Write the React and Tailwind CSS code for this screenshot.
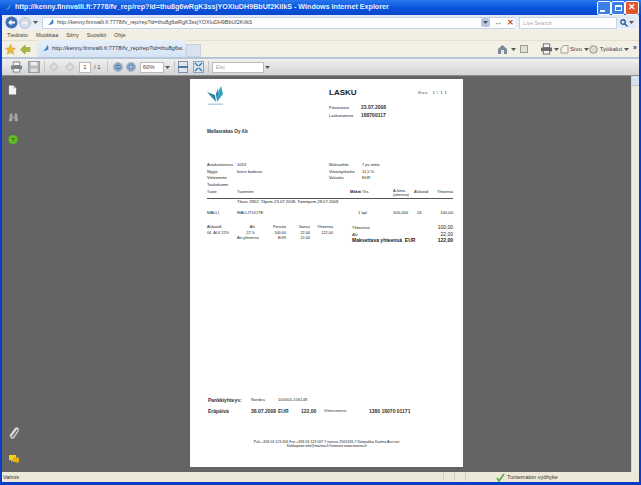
import React from "react";

const font = { fontFamily: '"Liberation Sans", Arial, sans-serif' };

function Win({ children, className }) {
  return <div className={"w-[14px] h-[14px] rounded-[2px] border border-white flex items-center justify-center " + className}>{children}</div>;
}

function Caret() {
  return <svg width="5" height="3" viewBox="0 0 5 3" className="shrink-0"><path d="M0 0h5L2.5 3z" fill="#555" /></svg>;
}

function IeIcon() {
  return (
    <svg width="9" height="9" viewBox="0 0 9 9" className="shrink-0">
      <path d="M1 6 Q4 7 6 2 L7 1 L7.5 5 Q5 8 1 6z" fill="#3a80c8" />
    </svg>
  );
}

function TbBtn({ children, className = "" }) {
  return <div className={"flex items-center justify-center " + className}>{children}</div>;
}

function Printer({ c = "#7c8286" }) {
  return (
    <svg width="13" height="12" viewBox="0 0 14 13">
      <rect x="3.5" y="1" width="7" height="4" fill="#f4f4f4" stroke={c} />
      <rect x="1" y="5" width="12" height="4" fill={c} />
      <rect x="3.5" y="8" width="7" height="4" fill="#f4f4f4" stroke={c} />
    </svg>
  );
}

function Disk() {
  return (
    <svg width="12" height="12" viewBox="0 0 13 13">
      <rect x="0.5" y="0.5" width="12" height="12" fill="#b4b8ba" stroke="#95999c" />
      <rect x="3" y="1" width="7" height="4" fill="#eceeef" />
      <rect x="3" y="8" width="7" height="4" fill="#dcdee0" />
    </svg>
  );
}

function Diamond({ up }) {
  return (
    <svg width="10" height="10" viewBox="0 0 11 11">
      <path d="M5.5 0.5 L10.5 5.5 L5.5 10.5 L0.5 5.5z" fill="#cfd2d4" stroke="#c2c5c8" />
      <path d={up ? "M5.5 3 L8 6 H3z" : "M5.5 8 L8 5 H3z"} fill="#e6e8e9" />
    </svg>
  );
}

function Zoom({ plus }) {
  return (
    <svg width="10" height="10" viewBox="0 0 11 11">
      <circle cx="5.5" cy="5.5" r="5" fill="#8aa6c0" stroke="#a9b8c6" />
      <circle cx="5.5" cy="5.5" r="2.6" fill="#4580b0" />
      <rect x="3.5" y="5" width="4" height="1" fill="#dde" />
      {plus && <rect x="5" y="3.5" width="1" height="4" fill="#dde" />}
    </svg>
  );
}

function Logo() {
  return (
    <svg width="17" height="20" viewBox="0 0 17 20">
      <path d="M0 6 L8 9 L9 16 Z" fill="#2d84a6" />
      <path d="M14 0 L16 8 L10 16 L10 8 Z" fill="#3aa0c4" />
      <path d="M9 8 L11 2 L10 15 Z" fill="#1d6f93" />
      <rect x="1" y="17.5" width="15" height="1.4" fill="#a9cfe0" />
    </svg>
  );
}

function Invoice() {
  const k = "text-[4px] leading-[6.5px] text-[#222]";
  return (
    <div className="w-[273px] h-[388px] bg-white shrink-0 pl-[17px] pr-[10px] flex flex-col text-[#333]" style={font}>
      <div className="flex h-[44px] pt-[7px]">
        <div className="w-[122px]"><Logo /></div>
        <div className="flex-1">
          <div className="flex h-[14px] items-center">
            <div className="w-[89px] text-[8px] font-bold text-[#222]">LASKU</div>
            <div className="text-[4px] tracking-[0.5px] text-[#333]">Sivu &nbsp; 1 / 1 1</div>
          </div>
          <div className="flex mt-[4px] h-[8px] items-center">
            <div className="w-[32px] text-[4px] text-[#222]">Päiväväärä</div>
            <div className="text-[5px] font-bold">23.07.2008</div>
          </div>
          <div className="flex h-[8px] items-center">
            <div className="w-[32px] text-[4px] text-[#222]">Laskunumero</div>
            <div className="text-[5px] font-bold">188700117</div>
          </div>
        </div>
      </div>
      <div className="mt-[5px] h-[8px] text-[4.6px] leading-[8px] font-bold">Mallasrakas Oy Ab</div>
      <div className="mt-[26px] flex h-[28px]">
        <div className="w-[122px]">
          <div className={"flex " + k}><div className="w-[30px]">Asiakastunnus</div><div>1053</div></div>
          <div className={"flex " + k}><div className="w-[30px]">Myyjä</div><div>keers baderas</div></div>
          <div className={k}>Viitteemme</div>
          <div className={k}>Toukokuime</div>
        </div>
        <div>
          <div className={"flex " + k}><div className="w-[33px]">Maksuehto</div><div>7 pv netto</div></div>
          <div className={"flex " + k}><div className="w-[33px]">Viivästyskorko</div><div>11,5 %</div></div>
          <div className={"flex " + k}><div className="w-[33px]">Valuutta</div><div>EUR</div></div>
        </div>
      </div>
      <div className="flex h-[8px] items-start text-[3.8px] leading-[4px] text-[#222] border-b border-[#555] box-content">
        <div className="w-[30px]">Tuote</div>
        <div className="w-[113px]">Tuotenimi</div>
        <div className="w-[12px] font-bold">Määrä</div>
        <div className="w-[31px]">Yks.</div>
        <div className="w-[21px] leading-[3.5px]">A-hinta<br />(alennus)</div>
        <div className="w-[20px]">Alvkoodi</div>
        <div className="flex-1 text-right">Yhteensä</div>
      </div>
      <div className="pl-[30px] h-[7px] text-[4.2px] leading-[6px] text-[#222]">Tilaus 3352, Tilpvm 23.07.2008, Toimitpvm 28.07.2008</div>
      <div className="mt-[3px] flex h-[7px] text-[4.2px] leading-[7px] text-[#222]">
        <div className="w-[30px]">MALLI</div>
        <div className="w-[121px]">MALLITUOTE</div>
        <div className="w-[35px]">1 kpl</div>
        <div className="w-[24px]">100,000</div>
        <div className="w-[14px]">24</div>
        <div className="flex-1 text-right">100,00</div>
      </div>
      <div className="mt-[9px] flex h-[22px] text-[3.8px] leading-[5.5px] text-[#222]">
        <div className="w-[145px] grid grid-cols-[30px_18px_31px_24px_23px] content-start">
          <div>Alvkoodi</div><div className="text-right">Alv</div><div className="text-right">Perusta</div><div className="text-right">Vainus</div><div className="text-right">Yhteensä</div>
          <div>04 &nbsp;ALV 22%</div><div className="text-right">22 %</div><div className="text-right">100,00</div><div className="text-right">22,00</div><div className="text-right">122,00</div>
          <div className="col-span-2 pl-[30px] whitespace-nowrap">Alv yhteensä</div><div className="text-right">EUR</div><div className="text-right">22,00</div><div></div>
        </div>
        <div className="flex-1 flex flex-col text-[4.2px]">
          <div className="flex justify-between h-[7px]"><div>Yhteensä</div><div className="text-[5px]">100,00</div></div>
          <div className="flex justify-between h-[6px]"><div>Alv</div><div className="text-[5px]">22,00</div></div>
          <div className="flex justify-between h-[7px] font-bold text-[5px] text-[#222]"><div>Maksettava yhteensä &nbsp;EUR</div><div>122,00</div></div>
        </div>
      </div>
      <div className="mt-[149px] flex items-center h-[9px] font-bold text-[5px]">
        <div className="w-[44px] pl-[1px]">Pankkiyhteys:</div>
        <div className="w-[27px] font-normal text-[4.2px]">Nordea</div>
        <div className="font-normal text-[4.2px]">100000-106148</div>
      </div>
      <div className="mt-[2px] flex items-center h-[9px] text-[5px] font-bold">
        <div className="w-[44px] pl-[1px]">Eräpäivä</div>
        <div className="w-[27px]">38.07.2008</div>
        <div className="w-[23px]">EUR</div>
        <div className="w-[23px]">122,00</div>
        <div className="w-[45px] font-normal text-[4.2px]">Viitenumero</div>
        <div>1380 18070 01171</div>
      </div>
      <div className="mt-[24px] -ml-[17px] -mr-[10px] text-center text-[3.6px] leading-[4px] text-[#222]">
        <div>Puh +358 03 123 456 Fax +358 03 123 567 Y-tunnus 2561326-7 Kotipaikka Katima Arvi.net</div>
        <div>Sähköposti info@marina.fi Kotisivut www.marina.fi</div>
      </div>
    </div>
  );
}

export default function App() {
  return (
    <div className="w-[641px] h-[485px] overflow-hidden flex flex-col bg-[#0a3cc8]" style={font}>
      {/* Title bar */}
      <div className="h-[15px] shrink-0 flex items-center pl-[3px] pr-[2px] bg-gradient-to-b from-[#2a78ee] via-[#0a55dc] to-[#0a48cc]">
        <IeIcon />
        <div className="ml-[3px] flex-1 text-[7.15px] font-bold text-[#e8f0ff] truncate">http://kenny.finnvalli.fi:7778/fv_rep/rep?id=thu8g6wRgK3ssjYOXIuDH9BbUf2KiIkS - Windows Internet Explorer</div>
        <div className="flex">
          <Win className="bg-[#3a7fe8]"><div className="w-[5px] h-[1.5px] bg-white mt-[7px] -ml-[3px]" /></Win>
          <Win className="bg-[#3a7fe8]"><div className="w-[7px] h-[6px] border border-white border-t-2" /></Win>
          <Win className="bg-[#e0562c]"><span className="text-white text-[9px] font-bold leading-none">✕</span></Win>
        </div>
      </div>
      <div className="flex-1 min-h-0 mx-[2px] flex flex-col bg-[#f0ece0]">
        {/* Address bar */}
        <div className="h-[15px] shrink-0 flex items-center bg-gradient-to-b from-[#dfe8f4] to-[#eef2f8] pl-[3px] pr-[3px]">
          <svg width="13" height="13" viewBox="0 0 13 13" className="shrink-0">
            <circle cx="6.5" cy="6.5" r="6" fill="#3f6fb5" />
            <path d="M3 6.5 L6.5 3.5 V5.5 H10 V7.5 H6.5 V9.5z" fill="#fff" />
          </svg>
          <svg width="12" height="12" viewBox="0 0 12 12" className="shrink-0 ml-[1px]">
            <circle cx="6" cy="6" r="5.5" fill="#d3dbe6" stroke="#b8c2d0" />
            <path d="M9 6 L6 3.5 V5 H3 V7 H6 V8.5z" fill="#eef2f6" />
          </svg>
          <div className="ml-[2px] mr-[2px]"><Caret /></div>
          <div className="ml-[2px] w-[473px] h-[12px] bg-white border-y border-l border-[#c6d2e2] flex items-center pl-[3px] shrink-0">
            <IeIcon />
            <div className="ml-[2px] text-[5.4px] text-[#444] truncate">http://kenny.finnvalli.fi:7778/fv_rep/rep?id=thu8g6wRgK3ssjYOXIuDH9BbUf2KiIkS</div>
            <div className="ml-auto flex items-center h-full">
              <div className="w-[9px] h-[9px] rounded-[2px] bg-[#b3c7e2] flex items-center justify-center"><Caret /></div>
              <div className="ml-[3px] w-[10px] h-[10px] text-[8px] leading-[10px] text-center font-bold text-[#3a8a4a]">↔</div>
              <div className="ml-[2px] w-[10px] h-[10px] text-[8px] leading-[10px] text-center font-bold text-[#c84a3a]">✕</div>
            </div>
          </div>
          <div className="ml-[4px] flex-1 h-[12px] bg-white border border-[#c6d2e2] text-[5.5px] leading-[10px] pl-[3px] text-[#aaa]">Live Search</div>
          <div className="ml-[1px] w-[18px] h-[11px] flex items-center justify-center gap-[1px] bg-[#e2e9f3] rounded-[2px]">
            <svg width="8" height="8" viewBox="0 0 8 8"><circle cx="3" cy="3" r="2.2" fill="none" stroke="#2a5fa8" strokeWidth="1.4" /><path d="M4.5 4.5L7.5 7.5" stroke="#2a5fa8" strokeWidth="1.4" /></svg>
            <Caret />
          </div>
        </div>
        {/* Menu */}
        <div className="h-[11px] shrink-0 flex items-center pl-[5px] gap-[8px] text-[5.5px] text-[#444] bg-[#f2eee2] border-b border-[#e4dfcf]">
          <span>Tiedosto</span><span>Muokkaa</span><span>Siirry</span><span>Suosikit</span><span>Ohje</span>
        </div>
        {/* Favorites and tabs */}
        <div className="h-[18px] shrink-0 flex items-center pl-[3px] pr-[2px] bg-[#f2efe4] border-b-2 border-[#b7c6d8]">
          <svg width="11" height="11" viewBox="0 0 11 11" className="shrink-0"><path d="M5.5 0.5 L7 4 L10.5 4.3 L7.8 6.6 L8.7 10.3 L5.5 8.3 L2.3 10.3 L3.2 6.6 L0.5 4.3 L4 4z" fill="#eeba3a" stroke="#c9962a" strokeWidth="0.5" /></svg>
          <svg width="11" height="11" viewBox="0 0 11 11" className="ml-[4px] shrink-0"><path d="M0.5 5.5 L5 1 V3.5 H10 V7.5 H5 V10z" fill="#a6b83e" stroke="#7f8f30" strokeWidth="0.5" /></svg>
          <div className="ml-[6px] w-[149px] h-[17px] self-end bg-gradient-to-b from-[#e6eff9] to-[#d4e3f4] flex items-center pl-[4px] shrink-0 rounded-t-[2px]">
            <IeIcon />
            <span className="ml-[2px] text-[5.8px] text-[#334] whitespace-nowrap">http://kenny.finnvalli.fi:7778/fv_rep/rep?id=thu8g6w…</span>
          </div>
          <div className="w-[15px] h-[13px] self-end bg-[#d9e2ee] border border-[#c7d2e0] shrink-0" />
          <div className="ml-auto flex items-center text-[6px] text-[#444]">
            <svg width="11" height="11" viewBox="0 0 11 11"><path d="M5.5 1 L10 5 V10 H1 V5z" fill="#7a8a98" /><rect x="4" y="6" width="3" height="4" fill="#e9e6da" /></svg>
            <div className="ml-[3px]"><Caret /></div>
            <div className="ml-[4px] w-[8px] h-[8px] border border-[#9aa090] bg-[#dfe0d4]" />
            <div className="ml-[12px]"><Printer c="#6a6a6a" /></div>
            <div className="ml-[1px]"><Caret /></div>
            <svg width="9" height="9" viewBox="0 0 9 9" className="ml-[1px]"><path d="M1 8V3L4 0.5H8V8z" fill="#f5f3ea" stroke="#a0a090" /></svg>
            <span className="ml-[1px]">Sivu</span>
            <div className="ml-[2px]"><Caret /></div>
            <svg width="9" height="9" viewBox="0 0 9 9"><circle cx="4.5" cy="4.5" r="3.8" fill="#dcdccf" stroke="#959585" /></svg>
            <span className="ml-[2px]">Työkalut</span>
            <div className="ml-[2px]"><Caret /></div>
            <span className="ml-[4px] font-bold text-[7px] leading-[7px] -mt-[4px]">»</span>
          </div>
        </div>
        {/* PDF toolbar */}
        <div className="h-[17px] shrink-0 flex items-center pl-[8px] bg-gradient-to-b from-[#f0f0f0] to-[#d5d5d5] border-b border-[#8c8c8c] text-[#444]">
          <TbBtn><Printer /></TbBtn>
          <TbBtn className="ml-[5px]"><Disk /></TbBtn>
          <div className="ml-[4px] w-[1px] h-[12px] bg-[#c4c4c4]" />
          <TbBtn className="ml-[4px]"><Diamond up /></TbBtn>
          <TbBtn className="ml-[6px]"><Diamond /></TbBtn>
          <div className="ml-[4px] w-[12px] h-[11px] bg-white border border-[#bbb] text-[6px] leading-[9px] text-center">1</div>
          <span className="ml-[3px] text-[6px]">/ 1</span>
          <div className="ml-[6px] w-[1px] h-[12px] bg-[#c4c4c4]" />
          <TbBtn className="ml-[5px]"><Zoom /></TbBtn>
          <TbBtn className="ml-[3px]"><Zoom plus /></TbBtn>
          <div className="ml-[4px] w-[24px] h-[11px] bg-white border border-[#bbb] text-[6px] leading-[9px] pl-[2px]">60%</div>
          <div className="ml-[1px]"><Caret /></div>
          <div className="ml-[4px] w-[1px] h-[12px] bg-[#c4c4c4]" />
          <svg width="10" height="12" viewBox="0 0 10 12" className="ml-[3px]"><rect x="0.5" y="0.5" width="9" height="11" fill="#dfe6ee" stroke="#7d93aa" /><rect x="0" y="5" width="10" height="2" fill="#4f7aa3" /></svg>
          <svg width="11" height="12" viewBox="0 0 11 12" className="ml-[5px]"><rect x="0.5" y="0.5" width="10" height="11" fill="#d9e6f2" stroke="#8ba3bb" /><path d="M2 2L5 5M9 2L6 5M2 10L5 7M9 10L6 7" stroke="#2f7ab8" strokeWidth="1.3" /></svg>
          <div className="ml-[4px] w-[1px] h-[12px] bg-[#c4c4c4]" />
          <div className="ml-[3px] w-[52px] h-[11px] bg-white border border-[#bbb] text-[5.5px] leading-[9px] pl-[3px] text-[#aaa]">Etsi</div>
          <div className="ml-[1px]"><Caret /></div>
        </div>
        {/* Viewer */}
        <div className="flex-1 min-h-0 flex bg-[#646464]">
          <div className="w-[21px] shrink-0 flex flex-col items-start pt-[8px] pl-[6px] box-content">
            <svg width="9" height="12" viewBox="0 0 10 12"><path d="M1 1H6L9 4V11H1z" fill="#f2f2f2" /><path d="M6 1V4H9" fill="#bbb" /></svg>
            <svg width="11" height="12" viewBox="0 0 13 12" className="mt-[15px]"><path d="M1 11L2.5 2H5V11zM8 11V2H10.5L12 11z" fill="#a4a8a8" /><rect x="5" y="5" width="3" height="3" fill="#8b8f8f" /></svg>
            <svg width="10" height="11" viewBox="0 0 12 12" className="mt-[11px]"><circle cx="6" cy="6" r="5.5" fill="#5fbf22" /><text x="6" y="8.6" fontSize="7" fontWeight="bold" textAnchor="middle" fill="#2e5a10">?</text></svg>
            <svg width="11" height="15" viewBox="0 0 11 15" className="mt-auto"><path d="M9 3L3.5 10.5C2 13 4.5 14 6 12L10 6C11 4 9 2 7.5 3.5L2 11" fill="none" stroke="#dcdcdc" strokeWidth="1.3" /></svg>
            <svg width="12" height="10" viewBox="0 0 12 10" className="mt-[14px] mb-[8px]"><path d="M1 1H8V6H5L3 8V6H1z" fill="#f0cf20" /><path d="M5 3.5H11V8H10V9.5L8 8H5z" fill="#e2b10e" /></svg>
          </div>
          <div className="w-[161px] shrink-0" />
          <div className="pt-[3px] pb-[3px]"><Invoice /></div>
          <div className="flex-1" />
          <div className="w-[8px] shrink-0 bg-[#eceae0] border-l border-[#d9d6c6]">
            <div className="h-[10px] bg-[#d7e2f0] border-b border-[#bcc9da]" />
          </div>
        </div>
        {/* Status bar */}
        <div className="h-[10px] shrink-0 flex items-center bg-[#ece9d8] pl-[1px] text-[5.5px] text-[#333]">
          <span className="w-[440px] shrink-0">Valmis</span>
          <div className="w-[1px] h-[8px] bg-[#d0ccb8] shrink-0" />
          <div className="ml-[10px] w-[1px] h-[8px] bg-[#d0ccb8] shrink-0" />
          <div className="ml-[10px] w-[1px] h-[8px] bg-[#d0ccb8] shrink-0" />
          <svg width="9" height="9" viewBox="0 0 9 9" className="ml-[30px] shrink-0"><path d="M1 5L3 8L8 1" fill="none" stroke="#5db04a" strokeWidth="1.8" /></svg>
          <span className="ml-[2px]">Tuntematon vyöhyke</span>
        </div>
      </div>
      <div className="h-[3px] shrink-0" />
    </div>
  );
}
